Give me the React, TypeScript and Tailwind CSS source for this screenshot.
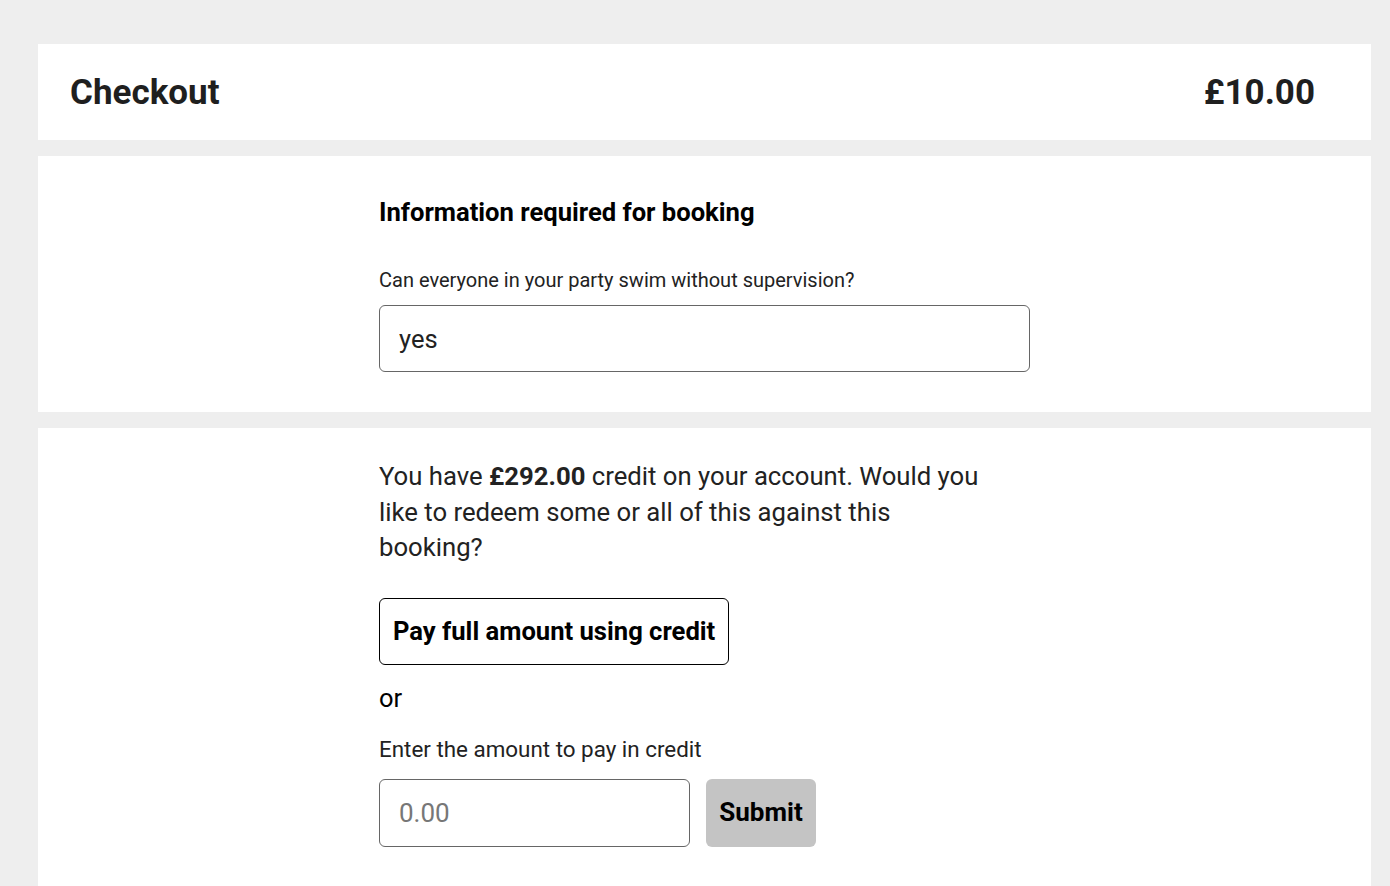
import React, { useState } from 'react';

export default function App() {
  const [answer, setAnswer] = useState('yes');
  const [amount, setAmount] = useState('');

  return (
    <div className="min-h-screen bg-[#eeeeee] pt-[44px] pl-[38px] pr-[19px] font-['Roboto',sans-serif] text-[#222]">
      {/* Header */}
      <div className="bg-white h-[96px] flex items-center justify-between pl-[32px] pr-[56px]">
        <h1 className="text-[35px] leading-[44px] pt-[2px] font-bold text-[#1f1f1f]">Checkout</h1>
        <div className="text-[35px] leading-[44px] pt-[2px] font-bold text-[#1f1f1f]">£10.00</div>
      </div>

      {/* Booking info */}
      <div className="bg-white mt-[16px] pt-[40px] pb-[40px]">
        <div className="w-[651px] mx-auto">
          <h2 className="text-[25.6px] leading-[32px] font-bold text-black">Information required for booking</h2>
          <label className="block mt-[40px] text-[20px] leading-[24px] text-[#222]">
            Can everyone in your party swim without supervision?
          </label>
          <input
            value={answer}
            onChange={(e) => setAnswer(e.target.value)}
            className="mt-[13px] w-full h-[67px] rounded-[6px] border border-[#666] px-[19px] text-[25.5px] text-[#222] outline-none"
          />
        </div>
      </div>

      {/* Credit */}
      <div className="bg-white mt-[16px] pt-[31px] pb-[60px]">
        <div className="w-[651px] mx-auto">
          <p className="max-w-[620px] text-[25.7px] leading-[35.5px] text-[#222]">
            You have <strong className="font-bold">£292.00</strong> credit on your account. Would you like to redeem some or all of this against this booking?
          </p>
          <button className="mt-[32px] h-[67px] px-[13px] rounded-[6px] border border-black bg-white text-[25.6px] font-bold text-black">
            Pay full amount using credit
          </button>
          <div className="mt-[17px] text-[25.5px] leading-[32px] text-black">or</div>
          <label className="block mt-[21px] text-[22.4px] leading-[28px] text-[#222]">Enter the amount to pay in credit</label>
          <div className="mt-[16px] flex items-center gap-[16px]">
            <input
              value={amount}
              onChange={(e) => setAmount(e.target.value)}
              placeholder="0.00"
              className="w-[311px] h-[68px] rounded-[6px] border border-[#666] px-[19px] text-[26px] text-[#222] placeholder:text-[#777] outline-none"
            />
            <button className="w-[110px] h-[68px] rounded-[6px] bg-[#c4c4c4] text-[26px] font-bold text-black">
              Submit
            </button>
          </div>
        </div>
      </div>
    </div>
  );
}
